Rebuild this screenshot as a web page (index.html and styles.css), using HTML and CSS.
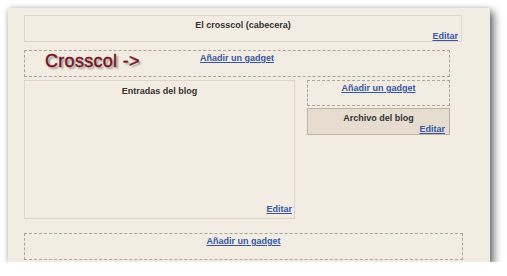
FILE: index.html
```html
<!DOCTYPE html>
<html lang="es">
<head>
    <meta charset="UTF-8" />
    <title>Diseño - Crosscol</title>
    <link rel="stylesheet" href="styles.css">
</head>
<body>
    <div class="layout-panel">
        <!-- cabecera -->
        <div class="widget header-widget">
            <div class="widget-title">El crosscol (cabecera)</div>
            <a class="edit-link" href="#">Editar</a>
        </div>

        <!-- crosscol -->
        <div class="add-gadget crosscol">
            <a href="#">Añadir un gadget</a>
            <span class="note">Crosscol -&gt;</span>
        </div>

        <div class="columns">
            <div class="widget main-widget">
                <div class="widget-title">Entradas del blog</div>
                <a class="edit-link" href="#">Editar</a>
            </div>
            <div class="sidebar">
                <div class="add-gadget side-add">
                    <a href="#">Añadir un gadget</a>
                </div>
                <div class="widget archive-widget">
                    <div class="widget-title">Archivo del blog</div>
                    <a class="edit-link" href="#">Editar</a>
                </div>
            </div>
        </div>

        <div class="add-gadget footer-add">
            <a href="#">Añadir un gadget</a>
        </div>
    </div>
</body>
</html>
```

FILE: styles.css
```css
body {
    margin: 0;
    background-color: #ffffff;
    font-family: 'Liberation Sans', Arial, sans-serif;
}

* {
    box-sizing: border-box;
}

/* Beige panel with the drop shadow */
.layout-panel {
    margin: 8px 0 0 8px;
    width: 482px;
    height: 254px;
    padding: 7px 0 0 16px;
    background-color: #f3ece3;
    box-shadow: 4px 4px 8px rgba(0, 0, 0, 0.55), 0 0 5px rgba(0, 0, 0, 0.18);
}

/* Widgets with a solid border */
.widget {
    display: flex;
    flex-direction: column;
    justify-content: space-between;
    border: 1px solid #ddd5ca;
    font-size: 9px;
    line-height: 11px;
}

.widget-title {
    color: #333333;
    font-weight: bold;
    text-align: center;
}

.edit-link {
    align-self: flex-end;
    color: #3657a3;
    font-weight: bold;
}

.header-widget {
    width: 438px;
    height: 27px;
    padding: 4px 3px 3px 3px;
    margin-bottom: 8px;
}

/* Dashed "add gadget" areas */
.add-gadget {
    border: 1px dashed #aaa59e;
    text-align: center;
    font-size: 9px;
    line-height: 11px;
}

.add-gadget a {
    color: #3657a3;
    font-weight: bold;
}

.crosscol {
    position: relative;
    width: 426px;
    height: 27px;
    padding-top: 2px;
    margin-bottom: 3px;
}

/* annotation over the crosscol */
.crosscol .note {
    position: absolute;
    left: 20px;
    top: -1px;
    color: #74111f;
    font-size: 18px;
    line-height: 22px;
    letter-spacing: 0.3px;
    -webkit-text-stroke: 0.4px #74111f;
    text-shadow: 2px 2px 2px rgba(0, 0, 0, 0.4);
}

.columns {
    display: flex;
    gap: 12px;
}

.main-widget {
    width: 271px;
    height: 139px;
    padding: 5px 2px 3px 2px;
}

.sidebar {
    width: 143px;
    display: flex;
    flex-direction: column;
    gap: 2px;
}

.side-add {
    height: 26px;
    padding-top: 2px;
}

.archive-widget {
    height: 27px;
    padding: 4px 4px 2px 4px;
    background-color: #e6ddd0;
    border-color: #bdb3a6;
}

.footer-add {
    width: 439px;
    height: 27px;
    margin-top: 14px;
    padding-top: 2px;
}
```
